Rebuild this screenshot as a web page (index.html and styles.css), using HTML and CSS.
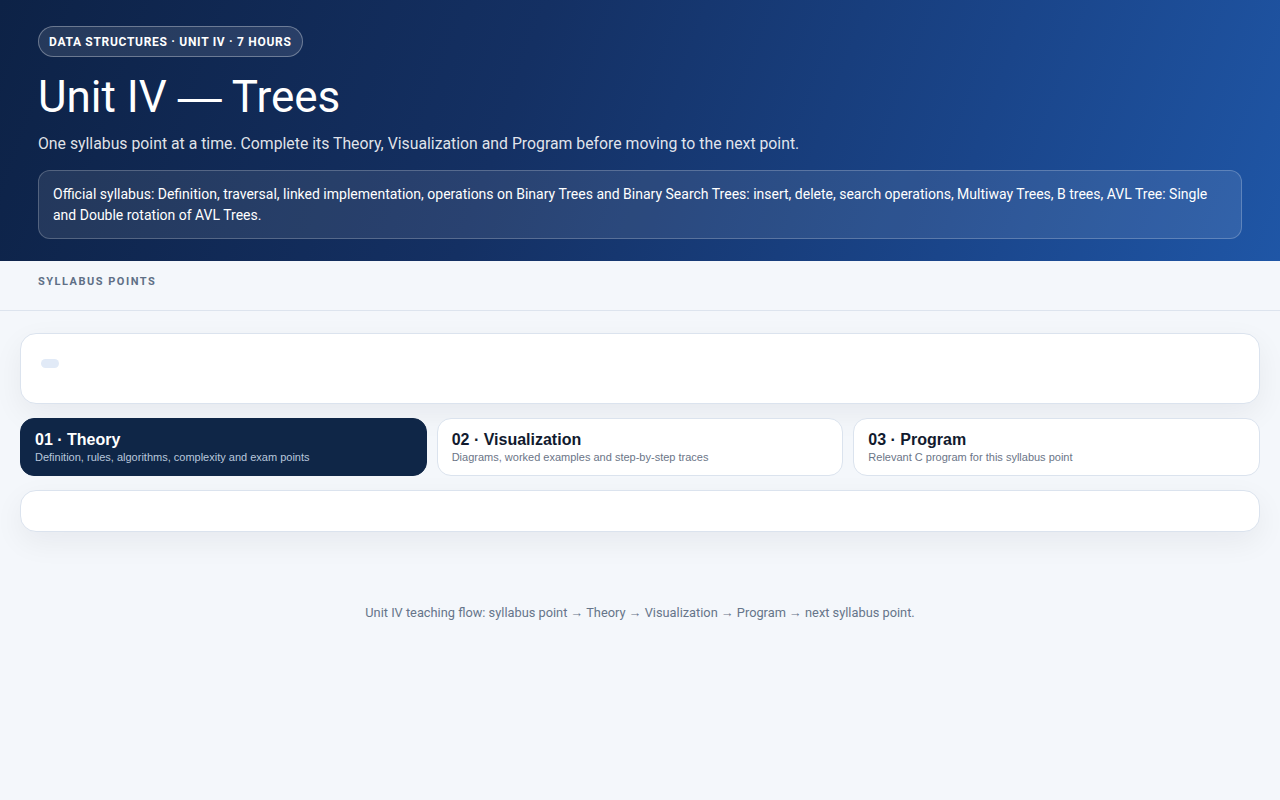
FILE: index.html
```html
<!DOCTYPE html>
<html lang="en">
<head>
<meta charset="utf-8">
<title>Unit IV — Trees</title>
<link rel="stylesheet" href="styles.css">
</head>
<body>
<header class="hero">
  <div class="badge">DATA STRUCTURES · UNIT IV · 7 HOURS</div>
  <h1 class="title">Unit IV <span class="dash">—</span> Trees</h1>
  <p class="lead">One syllabus point at a time. Complete its Theory, Visualization and Program before moving to the next point.</p>
  <div class="syllabus">Official syllabus: Definition, traversal, linked implementation, operations on Binary Trees and Binary Search Trees: insert, delete, search operations, Multiway Trees, B trees, AVL Tree: Single and Double rotation of AVL Trees.</div>
</header>
<nav class="points-bar">
  <span class="points-label">SYLLABUS POINTS</span>
</nav>
<main class="content">
  <section class="card card-point">
    <span class="skeleton"></span>
  </section>
  <div class="tabs">
    <button class="tab active">
      <span class="tab-title">01 · Theory</span>
      <span class="tab-desc">Definition, rules, algorithms, complexity and exam points</span>
    </button>
    <button class="tab">
      <span class="tab-title">02 · Visualization</span>
      <span class="tab-desc">Diagrams, worked examples and step-by-step traces</span>
    </button>
    <button class="tab">
      <span class="tab-title">03 · Program</span>
      <span class="tab-desc">Relevant C program for this syllabus point</span>
    </button>
  </div>
  <section class="card card-body"></section>
</main>
<footer class="foot">Unit IV teaching flow: syllabus point → Theory → Visualization → Program → next syllabus point.</footer>
</body>
</html>
```

FILE: styles.css
```css
* { box-sizing: border-box; }
html, body { margin: 0; padding: 0; }
body {
  background: #f4f7fb;
  font-family: Roboto, "Liberation Sans", Arial, sans-serif;
  color: #0f172a;
  min-height: 800px;
}
.hero {
  background: linear-gradient(110deg, #0d2246 0%, #143063 40%, #1a458a 75%, #1f56a6 100%);
  padding: 26px 38px 22px;
  color: #fff;
  height: 261px;
}
.badge {
  display: inline-block;
  height: 31px;
  line-height: 30px;
  padding: 0 10px;
  border: 1px solid rgba(255,255,255,0.32);
  background: rgba(255,255,255,0.1);
  border-radius: 999px;
  font-size: 12px;
  font-weight: 700;
  letter-spacing: 0.7px;
}
.title {
  margin: 14px 0 0;
  font-size: 44px;
  font-weight: 400;
  line-height: 52px;
}
.dash {
  font-family: "Liberation Sans", Arial, sans-serif;
  font-weight: 300;
}
.lead {
  margin: 10px 0 0;
  font-size: 15.8px;
  line-height: 22px;
  color: rgba(255,255,255,0.88);
}
.syllabus {
  margin-top: 15px;
  padding: 13px 14px 12px;
  border: 1px solid rgba(255,255,255,0.22);
  background: rgba(255,255,255,0.09);
  border-radius: 12px;
  font-size: 14px;
  line-height: 21px;
  color: #fff;
}
.points-bar {
  height: 50px;
  padding: 9px 38px 0;
  border-bottom: 1px solid #dde4ee;
}
.points-label {
  font-size: 11px;
  font-weight: 700;
  letter-spacing: 1.5px;
  color: #5f6f86;
}
.content {
  padding: 22px 20px 0;
  display: flex;
  flex-direction: column;
  gap: 14px;
}
.card {
  background: #fff;
  border: 1px solid #dbe3ee;
  border-radius: 16px;
  box-shadow: 0 10px 30px rgba(15, 23, 42, 0.06);
}
.card-point {
  height: 71px;
  padding: 25px 20px;
}
.skeleton {
  display: block;
  width: 18px;
  height: 9px;
  border-radius: 5px;
  background: #e1eaf7;
}
.tabs {
  display: grid;
  grid-template-columns: repeat(3, 1fr);
  gap: 10px;
}
.tab {
  display: flex;
  flex-direction: column;
  align-items: flex-start;
  height: 58px;
  padding: 11px 14px 0;
  background: #fff;
  border: 1px solid #dbe3ee;
  border-radius: 14px;
  text-align: left;
  font-family: "Liberation Sans", Arial, sans-serif;
  cursor: pointer;
}
.tab.active {
  background: #0f2647;
  border-color: #0f2647;
}
.tab-title {
  font-size: 16px;
  font-weight: 700;
  line-height: 19px;
  color: #111a2e;
}
.tab-desc {
  margin-top: 1px;
  font-size: 11px;
  line-height: 15px;
  color: #6b7587;
}
.tab.active .tab-title { color: #fff; }
.tab.active .tab-desc { color: #b9c6dc; }
.card-body {
  height: 42px;
}
.foot {
  margin-top: 73px;
  text-align: center;
  font-size: 12.8px;
  color: #66758a;
}
```
